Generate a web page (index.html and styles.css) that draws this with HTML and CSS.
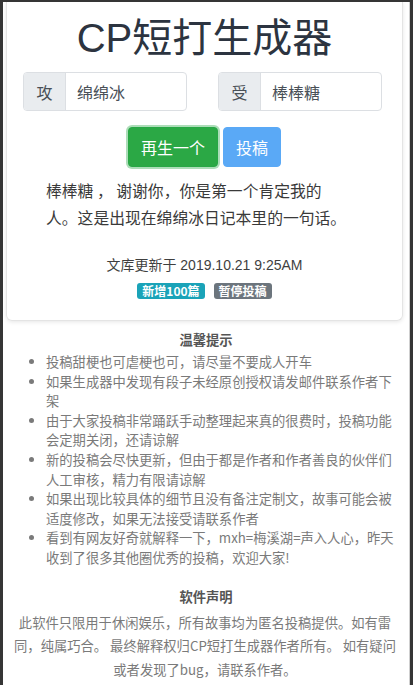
FILE: index.html
```html
<!DOCTYPE html>
<html lang="zh-CN">
<head>
<meta charset="utf-8">
<title>CP短打生成器</title>
<link rel="stylesheet" href="styles.css">
</head>
<body>
<div class="page">
  <div class="card">
    <h1 class="title">CP短打生成器</h1>
    <div class="inputs">
      <div class="group">
        <span class="addon">攻</span>
        <span class="field">绵绵冰</span>
      </div>
      <div class="group">
        <span class="addon">受</span>
        <span class="field">棒棒糖</span>
      </div>
    </div>
    <div class="buttons">
      <button class="btn btn-green">再生一个</button>
      <button class="btn btn-blue">投稿</button>
    </div>
    <p class="story">棒棒糖 ， 谢谢你，你是第一个肯定我的<br>人。这是出现在绵绵冰日记本里的一句话。</p>
    <p class="update">文库更新于 2019.10.21 9:25AM</p>
    <div class="badges">
      <span class="badge badge-teal">新增100篇</span>
      <span class="badge badge-grey">暂停投稿</span>
    </div>
  </div>
  <div class="footer">
    <h2 class="heading">温馨提示</h2>
    <ul class="tips">
      <li>投稿甜梗也可虐梗也可，请尽量不要成人开车</li>
      <li>如果生成器中发现有段子未经原创授权请发邮件联系作者下架</li>
      <li>由于大家投稿非常踊跃手动整理起来真的很费时，投稿功能会定期关闭，还请谅解</li>
      <li>新的投稿会尽快更新，但由于都是作者和作者善良的伙伴们人工审核，精力有限请谅解</li>
      <li>如果出现比较具体的细节且没有备注定制文，故事可能会被适度修改，如果无法接受请联系作者</li>
      <li>看到有网友好奇就解释一下，mxh=梅溪湖=声入人心，昨天收到了很多其他圈优秀的投稿，欢迎大家!</li>
    </ul>
    <h2 class="heading heading-decl">软件声明</h2>
    <p class="decl">此软件只限用于休闲娱乐，所有故事均为匿名投稿提供。如有雷同，纯属巧合。 最终解释权归CP短打生成器作者所有。 如有疑问或者发现了bug，请联系作者。</p>
  </div>
</div>
</body>
</html>
```
FILE: styles.css
```css
html, body {
  margin: 0;
  padding: 0;
}
body {
  background: #353535;
  font-family: "Liberation Sans", "Noto Sans CJK SC", sans-serif;
  color: #333;
}
.page {
  margin: 2px 3px 0 3px;
  background: #fff;
  border-right: 1px solid #cfcfcf;
  min-height: 683px;
  overflow: hidden;
}
.card {
  margin: 0 6px 0 3px;
  border: 1px solid #e4e4e4;
  border-top: 0;
  border-radius: 0 0 6px 6px;
  box-shadow: 0 1px 4px rgba(0, 0, 0, 0.10);
  padding: 12px 0 21px;
  text-align: center;
}
.title {
  margin: 0;
  font-size: 40px;
  line-height: 48px;
  font-weight: 400;
  color: #2c3440;
}
.inputs {
  margin-top: 10px;
  display: flex;
  gap: 31px;
  padding: 0 20px 0 16px;
}
.group {
  flex: 1;
  display: flex;
  height: 39px;
  box-sizing: border-box;
  border: 1px solid #dcdfe3;
  border-radius: 4px;
  overflow: hidden;
  font-family: "Noto Sans CJK SC", sans-serif;
  font-size: 16px;
  color: #495057;
}
.addon {
  width: 41px;
  background: #e9ecef;
  border-right: 1px solid #dcdfe3;
  display: flex;
  align-items: center;
  justify-content: center;
}
.field {
  flex: 1;
  display: flex;
  align-items: center;
  padding-left: 11px;
  text-align: left;
}
.buttons {
  margin-top: 16px;
  display: flex;
  justify-content: center;
  gap: 5px;
}
.btn {
  font-family: "Noto Sans CJK SC", sans-serif;
  font-size: 16px;
  line-height: 24px;
  height: 40px;
  padding: 0 12px;
  border-radius: 4px;
  color: #fff;
  border: 1px solid transparent;
}
.btn-green {
  background: #2ba845;
  border-color: #28a745;
  box-shadow: 0 0 0 2px rgba(72, 180, 97, 0.45);
}
.btn-blue {
  background: #5aa9f6;
  border-color: #5aa9f6;
}
.story {
  margin: 10px 0 0;
  padding: 0 20px 0 39px;
  text-align: left;
  font-family: "Noto Sans CJK SC", sans-serif;
  font-size: 15.8px;
  line-height: 27px;
  color: #3a3a3a;
}
.update {
  margin: 24px 0 0;
  font-size: 14px;
  line-height: 21px;
  color: #3f3f3f;
}
.badges {
  margin-top: 7px;
  display: flex;
  justify-content: center;
  gap: 9px;
}
.badge {
  font-family: "Noto Sans CJK SC", sans-serif;
  font-size: 12px;
  font-weight: 700;
  line-height: 12px;
  padding: 2px 5px;
  border-radius: 3px;
  color: #fff;
}
.badge-teal {
  background: #1aa3b8;
}
.badge-grey {
  background: #6c757d;
}
.footer {
  padding: 9px 0 0;
  font-family: "Noto Sans CJK SC", sans-serif;
  font-size: 13.3px;
  color: #7a7a7a;
}
.heading {
  margin: 0;
  text-align: center;
  font-size: 13.3px;
  line-height: 20px;
  font-weight: 700;
  color: #555;
}
.tips {
  margin: 2px 8px 0 0;
  padding-left: 43px;
  line-height: 19.6px;
}
.heading-decl {
  margin-top: 19px;
}
.decl {
  margin: 4px 10px 0 8px;
  text-align: center;
  line-height: 23.5px;
}
```
